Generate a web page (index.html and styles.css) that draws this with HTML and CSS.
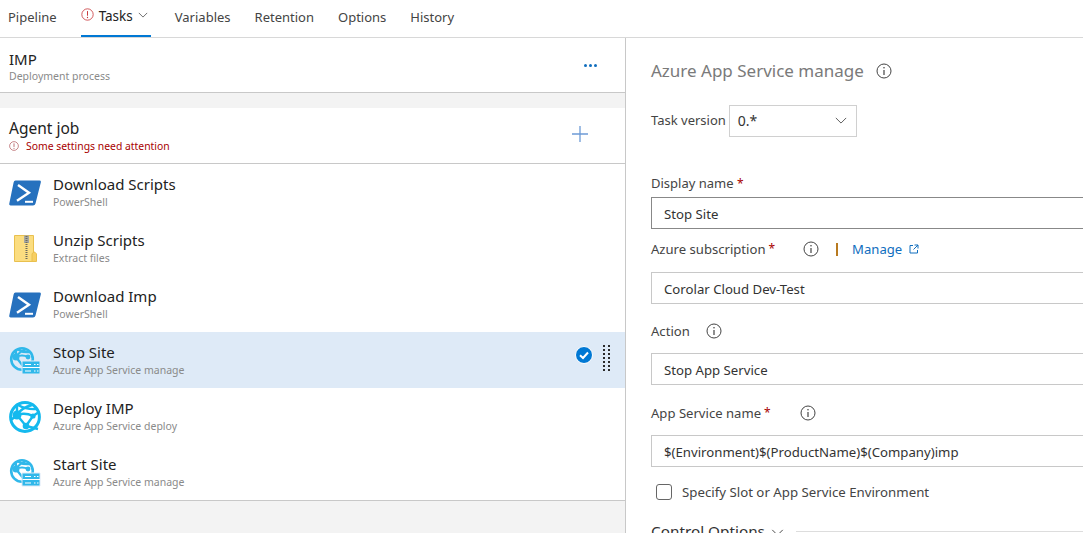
FILE: index.html
```html
<!DOCTYPE html>
<html lang="en">
<head>
<meta charset="utf-8">
<title>Tasks</title>
<link rel="stylesheet" href="styles.css">
</head>
<body>
<svg class="defs" width="0" height="0" aria-hidden="true">
  <defs>
    <symbol id="ps" viewBox="0 0 32 26">
      <path d="M6.5 0.500H30.500Q32.300 0.500 31.800 2.400L26.500 23.600Q26 25.500 24 25.500H1.600Q-0.200 25.500 0.300 23.600L4.600 2.400Q5 0.500 6.500 0.500Z" fill="#2671be"/>
      <path d="M9 5L20 12.800L8 20.800" fill="none" stroke="#fff" stroke-width="2.400"/>
      <path d="M16 21.800H24" fill="none" stroke="#fff" stroke-width="2"/>
    </symbol>
    <symbol id="globe" viewBox="0 0 32 32">
      <circle cx="16" cy="16" r="14.400" fill="none" stroke="#14b9ee" stroke-width="3"/>
      <path d="M8 3L8 14L17 25L29 28M9 4Q18 9 28 8M23 4Q12 7 8 14M8 14Q16 11 24 15L17 25M24 15L30 11M8 14L2 19" fill="none" stroke="#14b9ee" stroke-width="2.400"/>
      <circle cx="8" cy="14" r="4.500" fill="#14b9ee"/><circle cx="24" cy="15" r="2.600" fill="#14b9ee"/><circle cx="17" cy="25" r="3.300" fill="#14b9ee"/>
    </symbol>
    <symbol id="site" viewBox="0 0 32 29">
      <circle cx="13" cy="13" r="10.800" fill="none" stroke="#30b8ea" stroke-width="2.600"/>
      <path d="M7 3L7 11L14 20M8 3Q14 7 21 6M17 3Q10 6 7 11M7 11Q13 8 19 11" fill="none" stroke="#30b8ea" stroke-width="2.200"/>
      <circle cx="7" cy="11" r="3.500" fill="#30b8ea"/><circle cx="19" cy="11" r="2.400" fill="#30b8ea"/>
      <path d="M13 15H31V28H13Z" fill="#30b8ea" stroke="#deeaf7" stroke-width="1"/>
      <path d="M13.500 21.500H31" stroke="#fff" stroke-width="1"/>
      <path d="M16 18.500H22M16 25H22M25 18.500H26.500M28 18.500H29.500M25 25H26.500M28 25H29.500" stroke="#fff" stroke-width="1.200"/>
    </symbol>
    <symbol id="zip" viewBox="0 0 23 27">
      <path d="M0.500 0.500H19.500V26.500H0.500Z" fill="#fbdd80" stroke="#e9c04e"/>
      <path d="M10 0.500H15V8H10Z" fill="#a8a8a0"/>
      <path d="M12.500 1V25" stroke="#6b6b60" stroke-width="2" stroke-dasharray="1 1"/>
      <path d="M18 26.500V19Q20 15 22.500 19V26.500Z" fill="#f7cf63" stroke="#e9c04e"/>
    </symbol>
    <symbol id="info" viewBox="0 0 16 16">
      <circle cx="8" cy="8" r="7" fill="none" stroke="currentColor" stroke-width="1"/>
      <path d="M8 7V12" stroke="currentColor" stroke-width="1.200"/>
      <circle cx="8" cy="4.800" r=".8" fill="currentColor"/>
    </symbol>
    <symbol id="alert" viewBox="0 0 16 16">
      <circle cx="8" cy="8" r="7" fill="none" stroke="currentColor" stroke-width="1"/>
      <path d="M8 3.800V9.500" stroke="currentColor" stroke-width="1.200"/>
      <circle cx="8" cy="11.700" r=".8" fill="currentColor"/>
    </symbol>
  </defs>
</svg>

<nav class="tabs">
  <a class="tab">Pipeline</a>
  <a class="tab tab-active"><svg class="tab-alert"><use href="#alert"/></svg>Tasks<svg class="tab-chev" viewBox="0 0 12 7"><path d="M1 1L6 6L11 1" fill="none" stroke="currentColor"/></svg></a>
  <a class="tab">Variables</a>
  <a class="tab">Retention</a>
  <a class="tab">Options</a>
  <a class="tab">History</a>
</nav>

<main class="split">
  <section class="left">
    <header class="process">
      <div class="process-text">
        <div class="process-title">IMP</div>
        <div class="sub">Deployment process</div>
      </div>
      <div class="dots"><i></i><i></i><i></i></div>
    </header>
    <div class="gap"></div>
    <header class="job">
      <div>
        <div class="job-title">Agent job</div>
        <div class="job-warn"><svg class="warn-icon"><use href="#alert"/></svg>Some settings need attention</div>
      </div>
      <svg class="plus" viewBox="0 0 16 16"><path d="M8 0V16M0 8H16" stroke="#6d9bd6" stroke-width="1.300"/></svg>
    </header>
    <ul class="tasks">
      <li class="task"><svg class="ico ico-ps"><use href="#ps"/></svg><div><div class="task-name">Download Scripts</div><div class="sub task-sub">PowerShell</div></div></li>
      <li class="task"><svg class="ico ico-zip"><use href="#zip"/></svg><div><div class="task-name">Unzip Scripts</div><div class="sub task-sub">Extract files</div></div></li>
      <li class="task"><svg class="ico ico-ps"><use href="#ps"/></svg><div><div class="task-name">Download Imp</div><div class="sub task-sub">PowerShell</div></div></li>
      <li class="task task-selected"><svg class="ico ico-site"><use href="#site"/></svg><div><div class="task-name">Stop Site</div><div class="sub task-sub">Azure App Service manage</div></div>
        <div class="task-tools">
          <svg class="check" viewBox="0 0 18 18"><circle cx="9" cy="9" r="8.500" fill="#0078d4" stroke="#fff"/><path d="M5 9.300L8 12L13 6.500" fill="none" stroke="#fff" stroke-width="2"/></svg>
          <span class="grip"></span>
        </div>
      </li>
      <li class="task"><svg class="ico ico-globe"><use href="#globe"/></svg><div><div class="task-name">Deploy IMP</div><div class="sub task-sub">Azure App Service deploy</div></div></li>
      <li class="task"><svg class="ico ico-site"><use href="#site"/></svg><div><div class="task-name">Start Site</div><div class="sub task-sub">Azure App Service manage</div></div></li>
    </ul>
  </section>

  <section class="right">
    <h1 class="pane-title">Azure App Service manage<svg class="info info-title"><use href="#info"/></svg></h1>
    <div class="version">
      <span class="label version-label">Task version</span>
      <div class="select"><span>0.*</span><svg class="sel-chev" viewBox="0 0 14 8"><path d="M1 1L7 7L13 1" fill="none" stroke="#444"/></svg></div>
    </div>
    <div class="field-first label">Display name <b>*</b></div>
    <div class="input input-dark">Stop Site</div>
    <div class="label label-row label-sub">Azure subscription <b>*</b><svg class="info info-sub"><use href="#info"/></svg><span class="bar"></span><a class="manage">Manage</a><svg class="ext" viewBox="0 0 10 10"><path d="M4 1.500H1V9H8.500V6M5.500 1H9V4.500M9 1L4.500 5.500" fill="none" stroke="#106ebe"/></svg></div>
    <div class="input">Corolar Cloud Dev-Test</div>
    <div class="label label-row label-action">Action<svg class="info info-action"><use href="#info"/></svg></div>
    <div class="input">Stop App Service</div>
    <div class="label label-row label-app">App Service name <b>*</b><svg class="info info-app"><use href="#info"/></svg></div>
    <div class="input">$(Environment)$(ProductName)$(Company)imp</div>
    <label class="checkrow"><span class="box"></span>Specify Slot or App Service Environment</label>
    <div class="control"><span>Control Options</span><svg class="ctl-chev" viewBox="0 0 14 8"><path d="M1 1L7 7L13 1" fill="none" stroke="#333"/></svg><span class="rule"></span></div>
  </section>
</main>
</body>
</html>
```
FILE: styles.css
```css
* { box-sizing: border-box; }
html, body { margin: 0; height: 100%; overflow: hidden; }
body {
  width: 1083px; height: 533px; background: #fff; color: #333;
  font-family: "Noto Sans", "Open Sans", sans-serif; font-size: 13px;
}
.defs { position: absolute; }
.tabs { display: flex; height: 38px; border-bottom: 1px solid #d8d8d8; padding-left: 8px; gap: 24px; }
.tab { display: flex; align-items: center; height: 37px; color: #444; font-size: 13px; padding-bottom: 3px; }
.tab-active { border-bottom: 2px solid #0078d4; color: #222; height: 37px; padding: 0 3px 3px 0; font-size: 13.500px; }
.tab-alert { width: 13px; height: 13px; color: #c8363a; margin-right: 5px; margin-top: -3px; }
.tab-chev { width: 10px; height: 6px; margin-left: 5px; color: #555; margin-top: -2px; }
.split { display: flex; height: 495px; }
.left { width: 626px; flex: none; border-right: 1px solid #c8c8c8; background: #f3f3f3; }
.process { height: 55px; background: #fff; border-bottom: 1px solid #c8c8c8; display: flex; justify-content: space-between; align-items: center; padding: 0 28px 0 9px; }
.process-text { padding-top: 2px; }
.process-title { font-size: 15px; line-height: 20px; color: #222; }
.sub { font-size: 10.500px; line-height: 14px; color: #8a8a8a; }
.task-sub { margin-top: 1px; }
.dots { display: flex; gap: 2px; }
.dots i { width: 3px; height: 3px; background: #106ebe; border-radius: 50%; }
.gap { height: 15px; }
.job { height: 56px; background: #fff; border-bottom: 1px solid #c8c8c8; display: flex; justify-content: space-between; align-items: center; padding: 0 37px 0 9px; }
.job-title { font-size: 15.500px; line-height: 20px; color: #222; }
.job-warn { display: flex; align-items: center; font-size: 10.400px; line-height: 15px; color: #a80000; margin-top: 1px; }
.warn-icon { width: 10px; height: 10px; color: #a84448; margin-right: 7px; }
.plus { width: 16px; height: 16px; margin-bottom: 4px; }
.tasks { list-style: none; margin: 0; padding: 0; background: #fff; border-bottom: 1px solid #c8c8c8; }
.task { display: flex; align-items: center; height: 56px; padding-left: 53px; position: relative; }
.task-selected { background: #deeaf7; }
.task-name { font-size: 15px; line-height: 19px; color: #222; }
.ico { position: absolute; }
.ico-ps { left: 9px; top: 16px; width: 32px; height: 26px; }
.ico-zip { left: 14px; top: 15px; width: 23px; height: 27px; }
.ico-site { left: 9px; top: 14px; width: 32px; height: 29px; }
.ico-globe { left: 9px; top: 13px; width: 32px; height: 32px; }
.task-tools { position: absolute; right: 15px; top: 13px; display: flex; align-items: flex-start; gap: 10px; }
.check { width: 18px; height: 18px; margin-top: 1px; }
.grip { width: 7px; height: 28px; background-image: radial-gradient(circle at 1px 1px, #2b2b2b 1.300px, transparent 1.500px); background-size: 5px 4px; }
.right { flex: 1; padding: 0 0 0 25px; overflow: hidden; }
.pane-title { margin: 0; padding-top: 22px; height: 66px; font-weight: 400; font-size: 17px; line-height: 21px; color: #7a7a7a; display: flex; align-items: flex-start; }
.info { width: 16px; height: 16px; color: #444; flex: none; }
.info-title { margin: 3px 0 0 12px; }
.version { display: flex; align-items: center; height: 33px; gap: 3px; }
.version-label { margin-top: -2px; }
.label { font-size: 13px; line-height: 18px; color: #444; }
.label b { color: #a80000; font-weight: 400; font-size: 12px; }
.select { width: 128px; height: 32px; border: 1px solid #d0d0d0; display: flex; align-items: center; justify-content: space-between; padding: 0 9px 0 8px; color: #333; font-size: 14px; }
.sel-chev { width: 12px; height: 7px; }
.field-first { margin-top: 37px; height: 23px; }
.input { height: 32px; width: 470px; border: 1px solid #c8c8c8; border-right: 0; padding: 1px 0 0 12px; display: flex; align-items: center; color: #333; font-size: 13.200px; }
.input-dark { border-color: #888; }
.label-row { display: flex; align-items: center; height: 18px; font-size: 13.100px; }
.label-row b { margin-left: 3px; }
.label-sub { margin-top: 11px; margin-bottom: 14px; }
.label-action { margin-top: 18px; margin-bottom: 13px; }
.label-app { margin-top: 19px; margin-bottom: 13px; }
.info-sub { margin-left: 28px; }
.bar { width: 2px; height: 13px; background: #b87a20; margin: 0 14px 0 17px; }
.manage { color: #106ebe; }
.ext { width: 10px; height: 10px; margin-left: 7px; }
.info-action { margin-left: 16px; }
.info-app { margin-left: 29px; }
.checkrow { display: flex; align-items: center; height: 18px; margin: 16px 0 0 5px; font-size: 13.250px; color: #444; }
.box { width: 16px; height: 16px; border: 1px solid #666; border-radius: 3px; margin-right: 10px; flex: none; }
.control { display: flex; align-items: center; margin-top: 20px; font-size: 15.300px; color: #333; line-height: 20px; }
.ctl-chev { width: 13px; height: 7px; margin: 2px 0 0 6px; flex: none; }
.rule { flex: 1; height: 1px; background: #ddd; margin-left: 12px; }
```
